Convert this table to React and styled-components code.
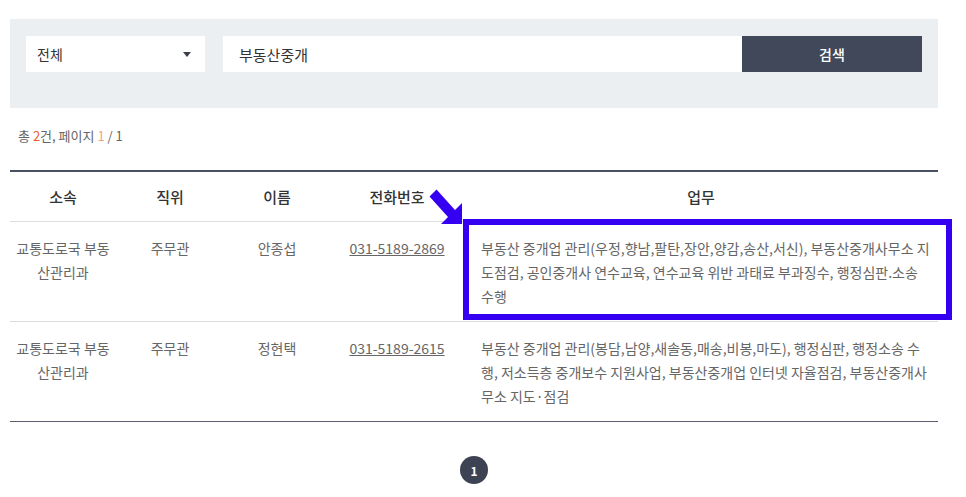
import styled, { createGlobalStyle } from "styled-components";

const GlobalStyle = createGlobalStyle`
  body {
    margin: 0;
    background: #fff;
    font-family: "Noto Sans CJK KR", "Noto Sans", sans-serif;
    color: #666;
  }
`;

const Page = styled.div`
  width: 928px;
  padding: 19px 0 0 10px;
`;

const SearchPanel = styled.div`
  background: #eceff2;
  padding: 17px 16px 36px 16px;
  display: flex;
  align-items: stretch;
`;

const Select = styled.div`
  width: 179px;
  height: 36px;
  background: #fff;
  display: flex;
  align-items: center;
  justify-content: space-between;
  padding: 0 14px 0 11px;
  box-sizing: border-box;
  font-size: 14px;
  color: #333;
  margin-right: 18px;
`;

const Caret = styled.span`
  width: 0;
  height: 0;
  border-left: 4px solid transparent;
  border-right: 4px solid transparent;
  border-top: 5px solid #3a3f4a;
`;

const SearchInput = styled.div`
  flex: 1;
  height: 36px;
  background: #fff;
  display: flex;
  align-items: center;
  padding-left: 16px;
  font-size: 15px;
  color: #333;
`;

const SearchButton = styled.button`
  width: 180px;
  height: 36px;
  border: none;
  background: #414859;
  color: #fff;
  font-family: inherit;
  font-size: 14px;
  font-weight: 500;
  cursor: pointer;
`;

const Count = styled.p`
  margin: 18px 0 24px 8px;
  font-size: 13px;
  line-height: 20px;
  color: #666;
`;

const Accent = styled.span`
  color: ${(p) => (p.light ? "#f4a27c" : "#e8612c")};
`;

const TableWrap = styled.div`
  position: relative;
`;

const Table = styled.table`
  width: 100%;
  border-collapse: collapse;
  table-layout: fixed;
  border-top: 2px solid #4a5163;
  border-bottom: 1px solid #5a5f6b;
`;

const Th = styled.th`
  height: 49px;
  font-size: 15px;
  font-weight: 500;
  color: #333;
  border-bottom: 1px solid #ddd;
  padding: 0;
`;

const Row = styled.tr`
  & + & td {
    border-top: 1px solid #ddd;
  }
`;

const Td = styled.td`
  font-size: 14px;
  line-height: 24px;
  color: #666;
  vertical-align: top;
  text-align: ${(p) => (p.left ? "left" : "center")};
  padding: ${(p) => (p.left ? "14px 2px 13px 17px" : "14px 5px 13px 5px")};
`;

const Phone = styled.a`
  color: #666;
  text-decoration: underline;
`;

const Highlight = styled.div`
  position: absolute;
  left: 453px;
  top: 49px;
  width: 489px;
  height: 101px;
  border: 6px solid #3500f2;
  box-sizing: border-box;
  pointer-events: none;
`;

const Arrow = styled.svg`
  position: absolute;
  left: 415px;
  top: 13px;
`;

const Pager = styled.div`
  display: flex;
  justify-content: center;
  margin-top: 34px;
`;

const PageDot = styled.span`
  width: 28px;
  height: 28px;
  border-radius: 50%;
  background: #3d4353;
  color: #fff;
  font-size: 12px;
  font-weight: 700;
  display: flex;
  align-items: center;
  justify-content: center;
`;

// \u2060 keeps "수행" together so the line breaks as in the source page
const rows = [
  {
    dept: "교통도로국 부동산관리과",
    rank: "주무관",
    name: "안종섭",
    phone: "031-5189-2869",
    work: "부동산 중개업 관리(우정,향남,팔탄,장안,양감,송산,서신), 부동산중개사무소 지도점검, 공인중개사 연수교육, 연수교육 위반 과태료 부과징수, 행정심판.소송 수\u2060행",
  },
  {
    dept: "교통도로국 부동산관리과",
    rank: "주무관",
    name: "정현택",
    phone: "031-5189-2615",
    work: "부동산 중개업 관리(봉담,남양,새솔동,매송,비봉,마도), 행정심판, 행정소송 수행, 저소득층 중개보수 지원사업, 부동산중개업 인터넷 자율점검, 부동산중개사무소 지도·점검",
  },
];

export default function App() {
  return (
    <Page>
      <GlobalStyle />
      <SearchPanel>
        <Select>
          전체
          <Caret />
        </Select>
        <SearchInput>부동산중개</SearchInput>
        <SearchButton>검색</SearchButton>
      </SearchPanel>
      <Count>
        총 <Accent>2</Accent>건, 페이지 <Accent light>1</Accent> / 1
      </Count>
      <TableWrap>
        <Table>
          <colgroup>
            <col style={{ width: 106 }} />
            <col style={{ width: 108 }} />
            <col style={{ width: 106 }} />
            <col style={{ width: 134 }} />
            <col />
          </colgroup>
          <thead>
            <tr>
              <Th>소속</Th>
              <Th>직위</Th>
              <Th>이름</Th>
              <Th>전화번호</Th>
              <Th>업무</Th>
            </tr>
          </thead>
          <tbody>
            {rows.map((r) => (
              <Row key={r.phone}>
                <Td>{r.dept}</Td>
                <Td>{r.rank}</Td>
                <Td>{r.name}</Td>
                <Td>
                  <Phone href="#">{r.phone}</Phone>
                </Td>
                <Td left>{r.work}</Td>
              </Row>
            ))}
          </tbody>
        </Table>
        <Highlight />
        <Arrow width="42" height="45" viewBox="0 0 42 45">
          <polygon
            points="11.5,6.5 30,27 37,20 37,41 16,41 23,34 4.5,13.5"
            fill="#3500f2"
          />
        </Arrow>
      </TableWrap>
      <Pager>
        <PageDot>1</PageDot>
      </Pager>
    </Page>
  );
}
